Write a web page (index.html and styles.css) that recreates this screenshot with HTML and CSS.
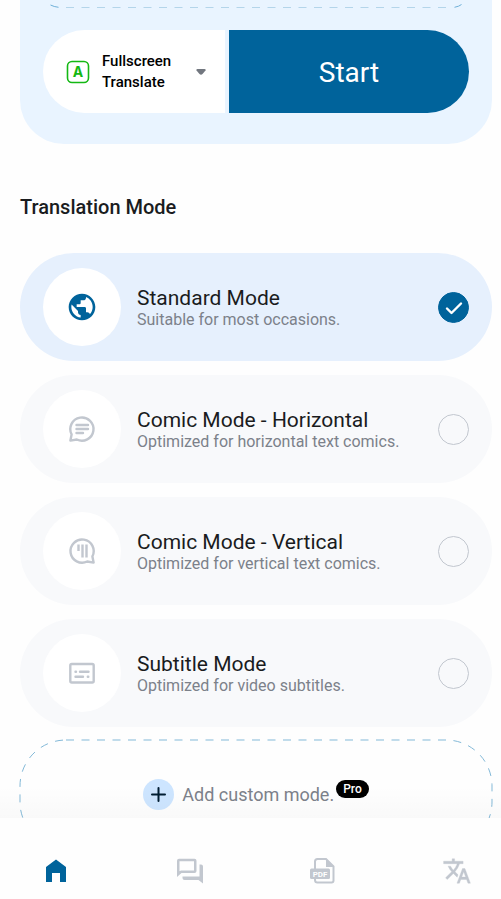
FILE: index.html
```html
<!DOCTYPE html>
<html lang="en">
<head>
<meta charset="utf-8">
<meta name="viewport" content="width=device-width, initial-scale=1">
<title>Screen Translate</title>
<link rel="stylesheet" href="styles.css">
</head>
<body>
<main class="content">
  <section class="launch">
    <svg class="launch-outline" height="9" aria-hidden="true">
      <path d="M7.500 5 Q11 6.800 15.500 7.300"/>
      <line class="faint" x1="23" y1="7.500" x2="100%" y2="7.500" stroke-dasharray="8 7.500"/>
      <svg x="100%" overflow="visible"><path class="mask" d="M-19 7.500H1"/><path d="M-7.500 4.500 Q-10 6.500 -14.500 7.300"/></svg>
    </svg>
    <div class="launch-bar">
      <label class="picker">
        <svg class="picker-icon" viewBox="0 0 24 24" aria-hidden="true">
          <rect x="1.500" y="1.500" width="21" height="21" rx="4.500"/>
          <text x="12" y="17" text-anchor="middle">A</text>
        </svg>
        <span class="picker-text">Fullscreen Translate</span>
        <svg class="picker-arrow" viewBox="0 0 10 6" aria-hidden="true"><path d="M1.500 0h7q1.500 0 1 1.500L6.500 5q-1.500 1.500-3 0L.500 1.500Q0 0 1.500 0z"/></svg>
        <select class="picker-select" aria-label="Translation area"><option>Fullscreen Translate</option></select>
      </label>
      <button class="start" type="button">Start</button>
    </div>
  </section>

  <h1 class="heading">Translation Mode</h1>

  <div class="modes" role="radiogroup" aria-label="Translation Mode">
    <label class="mode mode-active">
      <span class="mode-icon">
        <svg viewBox="0 0 24 24" aria-hidden="true"><path d="M12 2C6.480 2 2 6.480 2 12s4.480 10 10 10 10-4.480 10-10S17.520 2 12 2zm-1 17.930c-3.950-.490-7-3.850-7-7.930 0-.620.080-1.210.210-1.790L9 15v1c0 1.100.900 2 2 2v1.930zm6.900-2.540c-.260-.810-1-1.390-1.900-1.390h-1v-3c0-.550-.450-1-1-1H8v-2h2c.550 0 1-.450 1-1V7h2c1.100 0 2-.900 2-2v-.410c2.930 1.190 5 4.060 5 7.410 0 2.080-.800 3.970-2.100 5.390z"/></svg>
      </span>
      <span class="mode-text"><span class="mode-name">Standard Mode</span><span class="mode-note">Suitable for most occasions.</span></span>
      <span class="check">
        <input class="radio" type="radio" name="mode" checked>
        <svg class="tick" viewBox="0 0 31 31" aria-hidden="true"><path d="M9 16.500l4.500 4.500L23 11.500"/></svg>
      </span>
    </label>
    <label class="mode">
      <span class="mode-icon">
        <svg class="line" viewBox="0 0 32 32" aria-hidden="true"><path d="M4.400 27.600l1.200-6.200A11.600 11.600 0 1 1 10.800 26.500z"/><path d="M10.500 12H22M10.500 16H22M10.500 20H17"/></svg>
      </span>
      <span class="mode-text"><span class="mode-name">Comic Mode - Horizontal</span><span class="mode-note">Optimized for horizontal text comics.</span></span>
      <span class="check"><input class="radio" type="radio" name="mode"></span>
    </label>
    <label class="mode">
      <span class="mode-icon">
        <svg class="line" viewBox="0 0 32 32" aria-hidden="true"><path d="M27.600 27.600l-1.200-6.200A11.600 11.600 0 1 0 21.200 26.500z"/><path class="bars" d="M12.500 9.500V16M16.500 9.500V22.500M20.500 9.500V22.500"/></svg>
      </span>
      <span class="mode-text"><span class="mode-name">Comic Mode - Vertical</span><span class="mode-note">Optimized for vertical text comics.</span></span>
      <span class="check"><input class="radio" type="radio" name="mode"></span>
    </label>
    <label class="mode">
      <span class="mode-icon">
        <svg class="line" viewBox="0 0 32 32" aria-hidden="true"><rect x="4.300" y="7" width="23.400" height="18.500" rx="1.500"/><path d="M9.500 14.800h.500M14 14.800h8.500M9.500 19.800h7.500M21.800 19.800h.500"/></svg>
      </span>
      <span class="mode-text"><span class="mode-name">Subtitle Mode</span><span class="mode-note">Optimized for video subtitles.</span></span>
      <span class="check"><input class="radio" type="radio" name="mode"></span>
    </label>
  </div>

  <button class="add" type="button">
    <svg class="add-outline" aria-hidden="true"><rect width="100%" height="100%" rx="46" stroke-dasharray="8 7.500"/></svg>
    <svg class="add-plus" viewBox="0 0 31 31" aria-hidden="true"><circle cx="15.500" cy="15.500" r="15.500"/><path d="M15.500 9v13M9 15.500h13"/></svg>
    <span class="add-text">Add custom mode.</span>
    <span class="badge">Pro</span>
  </button>
</main>

<nav class="tabs" aria-label="Main">
  <a class="tab tab-active" href="#home" aria-label="Home"><svg viewBox="0 0 28 28" aria-hidden="true"><path d="M4 10L14 2.500l10 7.500V25h-6v-9h-8v9H4z"/></svg></a>
  <a class="tab" href="#chat" aria-label="Chat"><svg viewBox="0 0 28 28" aria-hidden="true"><path fill-rule="evenodd" d="M3 1.800h15.500a2 2 0 0 1 2 2V14a2 2 0 0 1-2 2H5.500L1 20v-16.200a2 2 0 0 1 2-2zm.500 2.500v10L5 13.500h13V4.300z"/><path d="M23.500 7.500H25a2 2 0 0 1 2 2v17L22.500 23H8.500a2 2 0 0 1-2-2v-1.500h17z"/></svg></a>
  <a class="tab" href="#pdf" aria-label="PDF"><svg viewBox="0 0 28 28" aria-hidden="true"><path class="sheet" d="M6 12V4.500a2.500 2.500 0 0 1 2.500-2.500H17l7.500 7.500V23.500a2 2 0 0 1-2 2h-14A2.500 2.500 0 0 1 6 23z"/><path d="M17 1.500v8.500h8z"/><rect x="1" y="11.500" width="20" height="10.500" rx="1.500"/><text x="11" y="19.700" text-anchor="middle">PDF</text></svg></a>
  <a class="tab" href="#translate" aria-label="Translate"><svg viewBox="0.500 0.500 23 23" aria-hidden="true"><path class="bold" d="M12.870 15.070l-2.540-2.510.030-.030c1.740-1.940 2.980-4.170 3.710-6.530H17V4h-7V2H8v2H1v1.990h11.170C11.500 7.920 10.440 9.750 9 11.350 8.070 10.320 7.300 9.190 6.690 8h-2c.730 1.630 1.730 3.170 2.980 4.560l-5.090 5.020L4 19l5-5 3.110 3.110.760-2.040zM18.500 10h-2L12 22h2l1.120-3h4.750L21 22h2l-4.500-12zm-2.620 7l1.620-4.330L19.120 17h-3.240z"/></svg></a>
</nav>
</body>
</html>
```
FILE: styles.css
```css
* { box-sizing: border-box; }

body {
  margin: 0;
  height: 100vh;
  display: flex;
  flex-direction: column;
  overflow: hidden;
  background: #fefefe;
  color: #1a1c1e;
  font-family: Roboto, "Liberation Sans", sans-serif;
}

button { border: 0; font: inherit; cursor: pointer; }

.content {
  flex: 1;
  min-height: 0;
  overflow: hidden;
  padding: 0 9px 0 20px;
}

/* Launch card */
.launch {
  padding: 0 23px 31px;
  border-radius: 0 0 44px 44px;
  background: #e9f4ff;
}

.launch-outline {
  display: block;
  width: 100%;
  fill: none;
  stroke: #6fb0d8;
}

.launch-outline .faint { stroke: #b4d5ea; }
.launch-outline .mask { stroke: #e9f4ff; stroke-width: 2; }

.launch-bar {
  display: flex;
  gap: 4px;
  height: 83px;
  margin-top: 21px;
}

.picker {
  position: relative;
  flex: 0 0 182px;
  display: flex;
  align-items: center;
  padding: 0 19px 0 23px;
  border-radius: 42px 0 0 42px;
  background: #fff;
}

.picker-icon {
  flex: none;
  width: 24px;
  height: 24px;
  margin-right: 12px;
}

.picker-icon rect { fill: none; stroke: #14b814; stroke-width: 1.6; }
.picker-icon text { fill: #14b814; font: 700 14px Inter, sans-serif; }

.picker-text {
  flex: 1;
  font-size: 15px;
  font-weight: 500;
  line-height: 21px;
  color: #000;
}

.picker-arrow {
  flex: none;
  width: 10px;
  height: 6px;
  fill: #72777f;
}

.picker-select {
  position: absolute;
  inset: 0;
  width: 100%;
  opacity: 0;
}

.start {
  flex: 1;
  padding-top: 3px;
  border-radius: 0 42px 42px 0;
  background: #00639b;
  color: #fff;
  font-size: 28px;
}

.heading {
  margin: 49px 0 32px;
  font-size: 20px;
  font-weight: 500;
  line-height: 28px;
}

/* Mode list */
.modes {
  display: flex;
  flex-direction: column;
  gap: 14px;
}

.mode {
  display: flex;
  align-items: center;
  gap: 16px;
  height: 108px;
  padding: 0 23px;
  border-radius: 54px;
  background: #f8f9fb;
}

.mode-active { background: #e6f0fd; }

.mode-icon {
  flex: none;
  display: grid;
  place-items: center;
  width: 78px;
  height: 78px;
  border-radius: 50%;
  background: #fff;
}

.mode-icon svg { width: 32px; height: 32px; fill: #00639b; }

.mode-icon .line {
  fill: none;
  stroke: #c2c7cf;
  stroke-width: 2.4;
  stroke-linecap: round;
  stroke-linejoin: round;
}

.mode-icon .bars { stroke-linecap: butt; }

.mode-text {
  flex: 1;
  display: flex;
  flex-direction: column;
  padding-top: 2px;
  white-space: nowrap;
}

.mode-name { font-size: 21px; line-height: 24px; }
.mode-note { font-size: 16px; line-height: 20px; color: #7c818a; }

.check {
  position: relative;
  flex: none;
  width: 31px;
  height: 31px;
}

.radio {
  appearance: none;
  display: block;
  width: 31px;
  height: 31px;
  margin: 0;
  border: 1px solid #c2c7cf;
  border-radius: 50%;
}

.radio:checked { border-color: #00639b; background: #00639b; }

.tick {
  position: absolute;
  inset: 0;
  fill: none;
  stroke: #fff;
  stroke-width: 2.4;
  stroke-linecap: round;
  stroke-linejoin: round;
}

/* Custom mode */
.add {
  position: relative;
  display: flex;
  align-items: center;
  justify-content: center;
  width: 100%;
  height: 108px;
  margin-top: 13px;
  padding: 0;
  background: none;
}

.add-outline {
  position: absolute;
  inset: 0;
  width: 100%;
  height: 100%;
  overflow: visible;
  fill: none;
  stroke: #83b9d8;
}

.add-plus {
  width: 31px;
  height: 31px;
  margin-right: 8px;
  fill: #cde5ff;
  stroke-linecap: round;
}

.add-plus path { stroke: #001d32; stroke-width: 2; }

.add-text { font-size: 18px; color: #7c818a; }

.badge {
  align-self: flex-start;
  margin: 40px 0 0 2px;
  padding: 0 7px;
  border-radius: 9px;
  background: #000;
  color: #fff;
  font-size: 12px;
  font-weight: 500;
  line-height: 18px;
}

/* Bottom tabs */
.tabs {
  position: relative;
  flex: none;
  display: flex;
  justify-content: space-between;
  align-items: center;
  height: 81px;
  padding: 24px 30px 0 42px;
  background: #fefefe;
}

.tabs::before {
  content: "";
  position: absolute;
  inset: -32px 0 100%;
  background: linear-gradient(rgba(0, 0, 0, 0), rgba(0, 0, 0, 0.02));
}

.tab { display: block; width: 28px; height: 28px; }
.tab svg { display: block; width: 28px; height: 28px; fill: #c2c7cf; }
.tab-active svg { fill: #00639b; }
.tab .sheet { fill: none; stroke: #c2c7cf; stroke-width: 2; }
.tab .bold { stroke: #c2c7cf; stroke-width: 0.3; }
.tab text { fill: #fff; font: 700 8px Roboto, sans-serif; }
```
